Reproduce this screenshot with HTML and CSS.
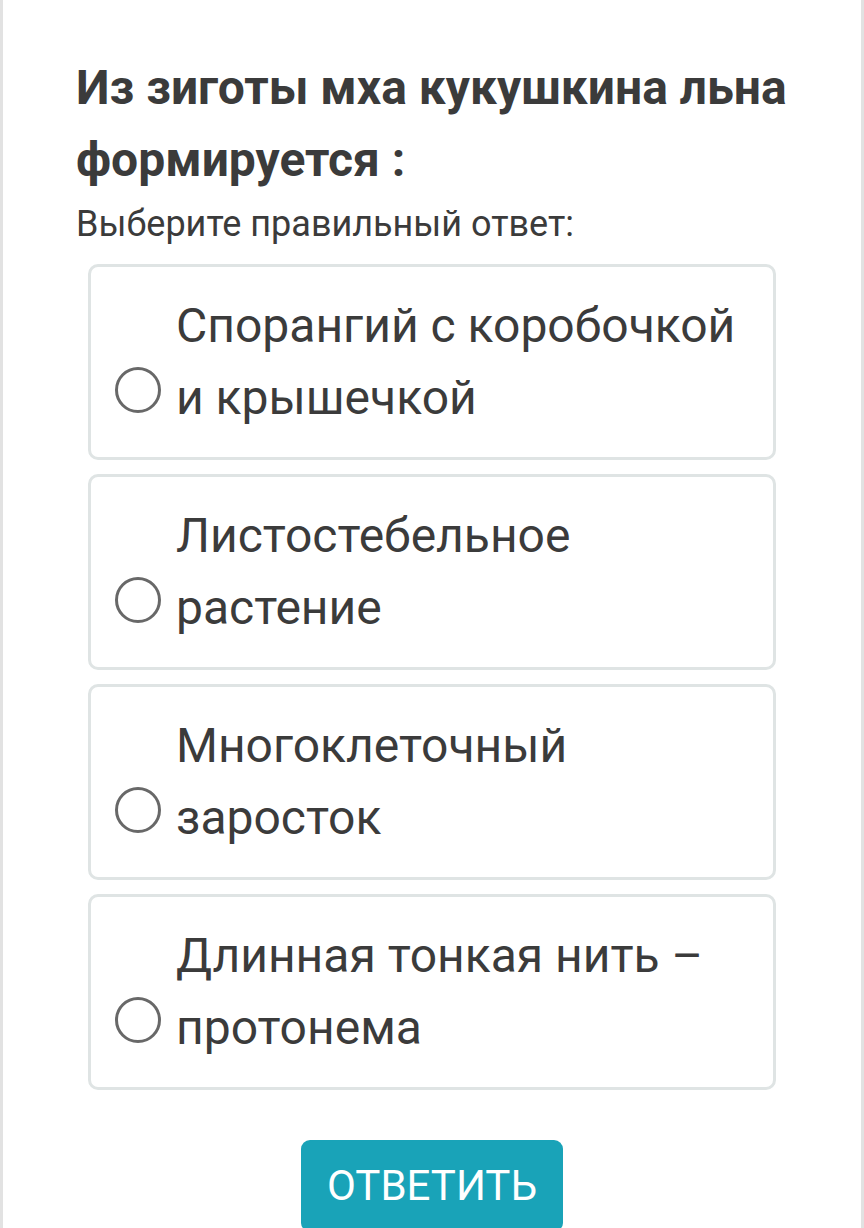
FILE: index.html
```html
<!DOCTYPE html>
<html lang="ru">
<head>
<meta charset="utf-8">
<title>Вопрос</title>
<link rel="stylesheet" href="styles.css">
</head>
<body>
<div class="page">
  <div class="question">
    <h1 class="title">Из зиготы мха кукушкина льна формируется :</h1>
    <div class="hint">Выберите правильный ответ:</div>
    <div class="options">
      <label class="option"><span class="radio"></span><span class="text">Спорангий с коробочкой и крышечкой</span></label>
      <label class="option"><span class="radio"></span><span class="text">Листостебельное растение</span></label>
      <label class="option"><span class="radio"></span><span class="text">Многоклеточный заросток</span></label>
      <label class="option"><span class="radio"></span><span class="text">Длинная тонкая нить – протонема</span></label>
    </div>
  </div>
  <div class="actions"><button class="submit">ОТВЕТИТЬ</button></div>
</div>
</body>
</html>
```
FILE: styles.css
```css
html, body {
  margin: 0;
  padding: 0;
  background: #ffffff;
}
body {
  font-family: Roboto, "Liberation Sans", sans-serif;
  color: #3b3b3b;
}
.page {
  box-sizing: border-box;
  min-height: 1228px;
  border-left: 3px solid #e2e2e2;
  border-right: 3px solid #e2e2e2;
  background: #fff;
  overflow: hidden;
}
.question {
  padding: 52px 0 0 73px;
}
.title {
  margin: 0;
  width: 740px;
  font-size: 48px;
  line-height: 72px;
  font-weight: 700;
  color: #3b3b3b;
}
.hint {
  margin-top: 1px;
  font-size: 36px;
  line-height: 54px;
  color: #3b3b3b;
}
.options {
  margin: 13px 0 0 12px;
  width: 688px;
  display: flex;
  flex-direction: column;
  gap: 14px;
}
.option {
  box-sizing: border-box;
  height: 196px;
  border: 3px solid #dfe4e4;
  border-radius: 10px;
  padding: 23px 20px 0 24px;
  display: flex;
  align-items: flex-start;
  gap: 15px;
}
.radio {
  flex: none;
  box-sizing: border-box;
  width: 46px;
  height: 46px;
  border: 3px solid #686868;
  border-radius: 50%;
  margin-top: 77px;
}
.text {
  font-size: 48px;
  line-height: 72px;
  color: #3b3b3b;
}
.actions {
  margin-top: 50px;
  display: flex;
  justify-content: center;
}
.submit {
  width: 262px;
  height: 92px;
  padding: 0;
  border: none;
  border-radius: 9px;
  background: #19a3b8;
  color: #ffffff;
  font-family: Roboto, "Liberation Sans", sans-serif;
  font-size: 42px;
  line-height: 92px;
  text-align: center;
  display: block;
}
```
